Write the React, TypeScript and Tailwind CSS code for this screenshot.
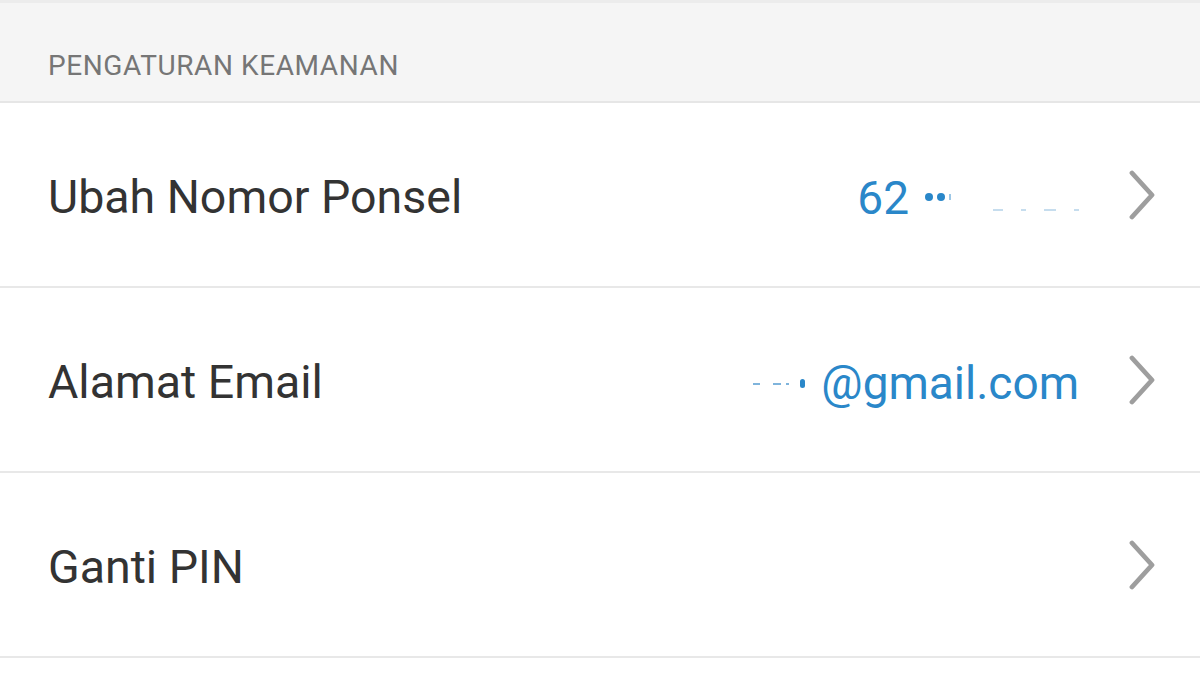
type Row = {
  label: string
  value?: React.ReactNode
}

function Chevron() {
  return (
    <svg width="30" height="50" viewBox="0 0 30 50" className="shrink-0">
      <path d="M5 3 L25 25 L5 47" fill="none" stroke="#9e9e9e" strokeWidth="4.8" strokeLinecap="round" strokeLinejoin="round" />
    </svg>
  )
}

const rows: Row[] = [
  {
    label: 'Ubah Nomor Ponsel',
    value: (
      <span className="flex items-center">
        <span>62</span>
        <span className="ml-[16px] flex items-center gap-[4px] pb-[2px]">
          <span className="w-[8px] h-[8px] rounded-full bg-[#2a87c9]" />
          <span className="w-[8px] h-[8px] rounded-full bg-[#2a87c9]" />
          <span className="w-[2px] h-[6px] bg-[#9cc7e6]" />
        </span>
        <span className="ml-[42px] w-[86px] flex items-end justify-between self-end pb-[10px]">
          <span className="w-[10px] h-[2px] bg-[#c6ddee]" />
          <span className="w-[5px] h-[2px] bg-[#c6ddee]" />
          <span className="w-[12px] h-[2px] bg-[#c6ddee]" />
          <span className="w-[5px] h-[2px] bg-[#c6ddee]" />
        </span>
      </span>
    ),
  },
  {
    label: 'Alamat Email',
    value: (
      <span className="flex items-center">
        <span className="flex items-center gap-[13px] mr-[16px] pt-[2px]">
          <span className="w-[7px] h-[2px] bg-[#7fb4dc]" />
          <span className="w-[8px] h-[2px] bg-[#7fb4dc]" />
          <span className="w-[3px] h-[2px] bg-[#7fb4dc] -ml-[8px]" />
          <span className="w-[5px] h-[9px] rounded-full bg-[#2a87c9] -ml-[2px]" />
        </span>
        <span>@gmail.com</span>
      </span>
    ),
  },
  { label: 'Ganti PIN' },
]

export default function App() {
  return (
    <div className="w-[1200px] h-[676px] bg-white overflow-hidden" style={{ fontFamily: 'Roboto, "Noto Sans", sans-serif' }}>
      <div className="h-[3px] bg-[#ececec]" />
      {/* section header */}
      <div className="h-[100px] bg-[#f5f5f5] border-b-[2px] border-[#e6e6e6] flex items-end pl-[48px] pb-[21px]">
        <span className="text-[28px] leading-none tracking-[0.6px] text-[#767676]">PENGATURAN KEAMANAN</span>
      </div>
      {rows.map((row) => (
        <div key={row.label} className="h-[185px] border-b-[2px] border-[#e8e8e8] flex items-center pl-[48px] pr-[43px]">
          <span className="text-[46.5px] text-[#333333] flex-1 leading-none pt-[6px]">{row.label}</span>
          {row.value && <span className="text-[46px] text-[#2a87c9] leading-none pt-[6px] mr-[48px]">{row.value}</span>}
          <Chevron />
        </div>
      ))}
    </div>
  )
}
